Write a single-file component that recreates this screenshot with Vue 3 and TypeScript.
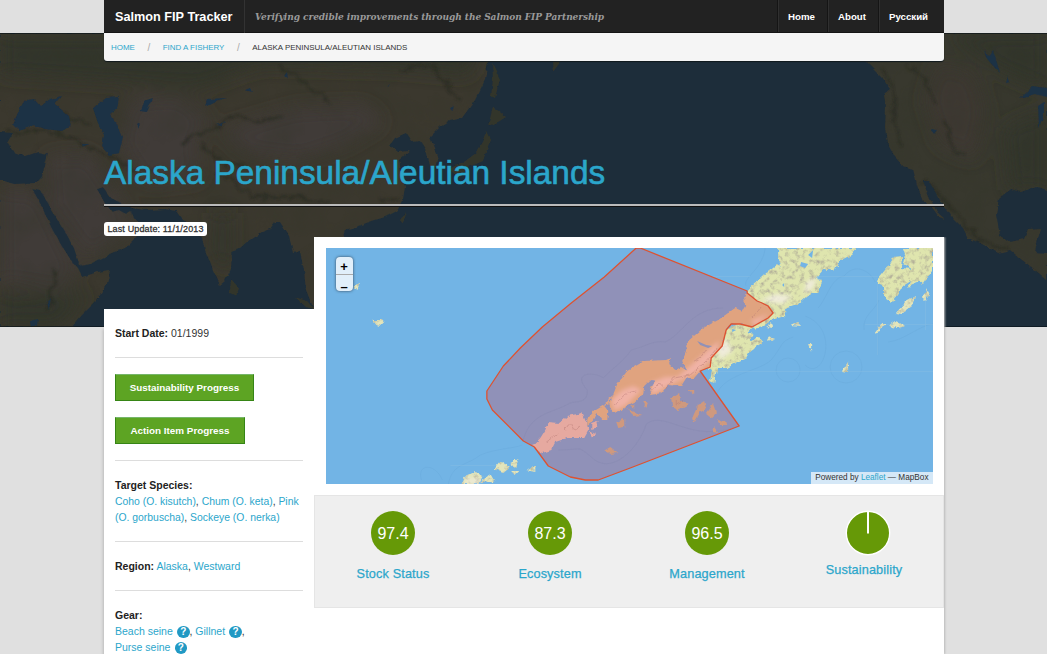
<script setup lang="ts">
interface Score { label: string; value?: string }

const navItems: string[] = ['Home', 'About', 'Русский']
const scores: Score[] = [
  { label: 'Stock Status', value: '97.4' },
  { label: 'Ecosystem', value: '87.3' },
  { label: 'Management', value: '96.5' },
  { label: 'Sustainability' },
]
const zone =
  'M636 248L640 248 747 291 747 293 757 301 762 303 768 306 773 313 768 318 752 327 740 324 731 324 726 330 722 346 711 358 710 367 700 371 739 426 630 468 598 480 585 480 570 477 548 466 534 447 523 441 492 410 486.500 399 486.500 391 503 366 520 348 542 327 571 303 604 277Z'
const peninsula =
  'M747 293L757 301 762 303 768 306 773 313 768 318 752 327 740 324 731 324 726 330 722 346 711 358 710 367 700 371 694 378 686 378 681 386 668 385 661 393 651 395 650 390 655 381 650 380 644 386 643 394 635 401 627 405 620 411 612 412 609 404 614 394 608 399 609 404 604 406 608 411 607 420 602 420 596 413 592 421 587 425 587 419 594 411 604 405 612 397 617 384 627 371 644 361 666 360 670 358 669 364 675 370 681 367 687 371 682 361 685 354 688 341 703 328 718 320 735 308 742 311 745 306 744 297Z'
</script>

<template>
  <div class="screen">
    <svg class="hero" viewBox="0 33 1047 294" preserveAspectRatio="none" aria-hidden="true">
      <defs>
        <filter id="coast" x="-2%" y="-2%" width="104%" height="104%">
          <feTurbulence type="fractalNoise" baseFrequency=".12" numOctaves="3" seed="4" result="n" />
          <feDisplacementMap in="SourceGraphic" in2="n" scale="4" xChannelSelector="R" yChannelSelector="G" />
        </filter>
        <filter id="relief" x="0" y="0" width="100%" height="100%">
          <feTurbulence type="fractalNoise" baseFrequency=".03" numOctaves="5" seed="9" />
          <feColorMatrix values="0 0 0 0 .03  0 0 0 0 .035  0 0 0 0 .02  1.6 0 0 0 -.6" result="t" />
          <feComposite in="t" in2="SourceGraphic" operator="in" />
        </filter>
        <filter id="soft" x="-30%" y="-30%" width="160%" height="160%"><feGaussianBlur stdDeviation="9" /></filter>
        <filter id="ridge" x="-10%" y="-20%" width="120%" height="140%">
          <feTurbulence type="fractalNoise" baseFrequency=".08" numOctaves="3" result="n" />
          <feDisplacementMap in="SourceGraphic" in2="n" scale="14" xChannelSelector="R" yChannelSelector="G" /><feGaussianBlur stdDeviation="1.300" />
        </filter>
        <path id="afroAsia" d="M0 33H489L488 63 485 80 475 100 462 118 450 121 440 127 430 137 434 148 438 160 436 168 430 166 427 152 420 141 412 142 406 133 395 138 390 145 398 152 410 151 399 160 401 172 405 186 403 200 397 211 385 217 372 221 358 226 345 230 342 240 349 252 346 266 330 278 318 266 314 310 306 290 304 270 300 251 293 253 289 236 280 222 275 222 270 229 262 232 248 241 240 248 232 252 231 269 225 281 220 285 213 270 205 250 202 238 194 235 189 225 182 219 176 211 165 209 145 210 132 208 122 204 110 197 103 187 97 189 104 202 112 212 119 210 126 214 131 211 134 218 141 224 137 236 125 248 110 254 90 264 80 266 74 248 64 230 49 205 40 190 32 188 39 201 50 225 60 243 72 262 78 269 82 277 98 272 110 270 107 284 97 300 82 315 72 327H0V180L15 184 36 183 42 176 45 166 48 154 38 152 26 156 12 151 7 143 13 133 0 132Z" />
        <path id="america" d="M840 33H1047V190L1036 186 1021 192 1011 189 999 199 996 215 1000 235 1010 242 1024 239 1028 229 1041 228 1036 246 1035 253 1047 254V280L1034 269 1022 260 1010 250 998 253 984 245 968 238 963 228 951 216 940 200 929 181 923 181 930 198 937 212 945 219 939 217 931 206 923 202 917 185 913 169 903 166 895 157 887 143 885 127 886 108 884 94 890 89 881 76 868 63Z" />
        <clipPath id="landClip"><use href="#afroAsia" /><use href="#america" /></clipPath>
      </defs>
      <rect y="33" width="1047" height="294" fill="#1d2d3a" />
      <g filter="url(#coast)">
        <use href="#afroAsia" fill="#3a382f" />
        <use href="#america" fill="#38372d" />
        <path fill="#33352a" d="M492 63L500 79 495 98 491 96 493 78ZM493 107L506 117 498 122 488 126ZM487 132L491 140 486 152 483 161 469 167 458 177 449 169 464 162 476 153 483 142ZM552 61H561L553 72ZM400 220L407 211 403 224ZM231 279L239 288 236 296 230 293ZM295 297L307 301 314 309 306 307Z" />
      </g>
      <g clip-path="url(#landClip)">
        <g filter="url(#soft)">
          <path d="M0 188L38 190 78 270 62 291 0 282ZM46 156L90 153 125 205 138 225 88 262 50 205ZM130 98L180 94 210 119 195 145 203 178 145 185 118 145ZM220 130L295 108 365 105 384 122 345 145 300 160 245 153Z" fill="#413a37" />
          <path d="M937 62L974 73 986 110 975 160 940 145 925 100Z" fill="#3d3932" />
          <path d="M0 35H480L470 75 396 68 260 65 200 87 0 74ZM0 294H88L60 327H0ZM215 213H230V270L214 258ZM1004 128L1047 110V190H1010ZM944 33H1047V90L1000 70Z" fill="#31352a" />
        </g>
        <g filter="url(#ridge)" fill="none" stroke="#282a20" stroke-width="2.600" opacity=".6">
          <path d="M59 111L75 121 92 125M8 135L35 130 70 137 93 150 110 157 129 168 155 170M214 170L236 185 253 198 278 198 295 194 315 205 330 202M180 142L202 132 228 119 249 115 260 122 286 117M200 145L218 161 245 167M55 270L52 290 48 310M278 66L296 75 312 92 332 103M401 69L430 65 448 86 460 100M883 70L895 93 892 120 900 145M909 63L925 82 934 103M944 120L954 151 966 157M925 181L945 201 959 217 980 241 1008 250M377 199L398 200" />
        </g>
      </g>
      <g filter="url(#relief)" opacity=".3"><use href="#afroAsia" /><use href="#america" /></g>
      <path fill="#1c3044" filter="url(#coast)" d="M13 124L20 108 25 100 35 99 41 106 50 99 61 96 55 104 69 116 71 125 62 131 45 129 34 125 20 131ZM93 108L105 98 119 97 117 109 110 114 118 126 123 137 119 153 109 155 102 147 104 135 98 123ZM204 107L207 99 227 98 216 101ZM141 111L144 101 153 98 147 112ZM216 124L226 121 222 125ZM245 90L250 88 252 92ZM284 76L287 72 288 78ZM386 86L390 82 388 87ZM450 108L454 106 452 111ZM47 303L51 298 49 309ZM30 321L38 319 37 326 31 326ZM82 144H88L83 147ZM136 125L139 123 138 129ZM985 50L989 56 993 50 1000 73 996 69 988 60ZM1020 98L1032 86 1047 88V97L1035 94ZM1038 105L1044 101 1044 115 1039 127ZM930 129L937 130 934 134ZM1006 83L1008 75 1010 82Z" />
      <path d="M0 33.500H1047M0 326.500H1047" stroke="#071016" opacity=".6" />
    </svg>

    <div class="page">
      <header class="topbar">
        <h1>Salmon FIP Tracker</h1>
        <p class="tagline"><span>Verifying credible improvements through the Salmon FIP Partnership</span></p>
        <nav><a v-for="item in navItems" :key="item">{{ item }}</a></nav>
      </header>

      <div class="crumbs">
        <a>HOME</a><i>/</i><a>FIND A FISHERY</a><i>/</i><span>ALASKA PENINSULA/ALEUTIAN ISLANDS</span>
      </div>

      <div class="heading"><h2><span>Alaska Peninsula/Aleutian Islands</span></h2></div>

      <div class="columns">
        <div class="left">
          <div class="update"><span>Last Update: 11/1/2013</span></div>
          <aside>
            <section class="start"><b>Start Date:</b> 01/1999</section>
            <section class="actions">
              <button class="b1">Sustainability Progress</button>
              <button class="b2">Action Item Progress</button>
            </section>
            <section class="species"><b>Target Species:</b><br /><a>Coho (O. kisutch)</a>, <a>Chum (O. keta)</a>, <a>Pink<br />(O. gorbuscha)</a>, <a>Sockeye (O. nerka)</a></section>
            <section class="region"><b>Region:</b> <a>Alaska</a>, <a>Westward</a></section>
            <section class="gear"><b>Gear:</b><br /><a>Beach seine</a> <em>?</em>, <a>Gillnet</a> <em>?</em>,<br /><a>Purse seine</a> <em>?</em></section>
          </aside>
        </div>

        <main>
          <div class="map">
            <svg viewBox="325.500 248 607.500 236" preserveAspectRatio="none" aria-hidden="true">
              <defs>
                <filter id="shore" x="-3%" y="-3%" width="106%" height="106%">
                  <feTurbulence type="fractalNoise" baseFrequency=".19" numOctaves="3" seed="3" result="n" />
                  <feDisplacementMap in="SourceGraphic" in2="n" scale="5" xChannelSelector="R" yChannelSelector="G" result="shape" />
                  <feTurbulence type="fractalNoise" baseFrequency=".2" numOctaves="4" seed="8" />
                  <feColorMatrix values="0 0 0 0 .45  0 0 0 0 .43  0 0 0 0 .32  2.6 0 0 0 -1.2" result="speck" />
                  <feComposite in="speck" in2="shape" operator="in" result="texture" />
                  <feMerge><feMergeNode in="shape" /><feMergeNode in="texture" /></feMerge>
                </filter>
                <filter id="edge" x="-5%" y="-5%" width="110%" height="110%">
                  <feTurbulence type="fractalNoise" baseFrequency=".2" numOctaves="3" seed="5" result="n" />
                  <feDisplacementMap in="SourceGraphic" in2="n" scale="4" xChannelSelector="R" yChannelSelector="G" />
                </filter>
                <filter id="blur"><feGaussianBlur stdDeviation="2" /></filter>
                <clipPath id="zoneClip"><path :d="zone" /></clipPath>
                <clipPath id="penClip"><path :d="peninsula" /></clipPath>
              </defs>
              <rect x="325" y="248" width="609" height="236" fill="#72b4e5" />
              <g fill="none" stroke="#68a9da" stroke-width=".7" opacity=".6">
                <path d="M421 480C416 463 435 463 442 480M448 484C452 463 466 466 480 455 497 448 512 449 522 445M765 248C763 269 742 278 746 286M715 400C718 374 759 372 771 360 783 346 779 342 793 337M818 308C827 298 831 278 844 276 857 260 873 275 875 282M864 330C862 315 875 311 879 300M888 342C903 341 922 324 933 324M805 316C841 329 823 383 805 365" />
                <circle cx="788" cy="370" r="12" /><circle cx="846" cy="367" r="16" />
              </g>
              <path d="M710 276.500H750M810 276.500H878M712 371.500H933M865 324.500H933M877.500 282V355M925.500 292V330M450 465.500H498" stroke="#82bae2" stroke-width=".6" />
              <g filter="url(#shore)">
                <path fill="#dfe5ae" d="M747 292L752 286 764 275 778 264 781 267 778 257 778 248H857L851 255 839 261 834 271 824 269 815 279 823 280 818 291 807 296 797 305 785 309 785 316 774 319 764 326 752 328 746 333 754 334 749 342 759 337 763 342 751 350 747 357 735 363 726 368 717 368 714 382 710 380 712 370 708 370 711 357 722 345 726 329 742 322 769 311ZM877 280L889 265 894 257 902 256 901 268 912 269 903 264 905 254 903 248H933V270L923 284 916 281 908 290 911 281 903 286 898 295 891 303 884 297 884 287 878 284Z" />
                <path fill="#e3e5bb" d="M895 313L906 301 915 296 912 306 902 314ZM874 333L880 325 886 323 880 331ZM889 326L896 321 905 326 897 328ZM922 298L927 288 930 294 925 301ZM766 327L772 323 773 328ZM790 325L797 322 801 326ZM842 371L848 362V372ZM808 344H811V352ZM769 337L774 339 767 341ZM461 484L463 478 473 473 483 475 478 484ZM480 482L490 474 494 481ZM494 469L500 462 510 466 503 472ZM510 463L518 459 516 468ZM525 470L535 466 535 472ZM512 471H518L514 475ZM371 320H383L380 326 375 325ZM352 286L360 283 357 290Z" />
              </g>
              <g filter="url(#blur)" fill="#f4eee9" opacity=".75"><path d="M716 346L726 339 732 351 720 360ZM807 281L817 278 812 289 804 293ZM760 300L776 294 792 296 782 304ZM466 479H479V483H465Z" /></g>
              <path fill="#72b4e5" d="M801 262L808 264 805 268 800 266ZM808 255L813 250 812 258ZM782 285L784 283 784 287ZM732 329L736 330 732 332Z" />
              <path :d="zone" fill="#9091b8" />
              <g clip-path="url(#zoneClip)">
                <path fill="none" stroke="#8587b0" stroke-width=".7" opacity=".5" d="M522 444C528 413 550 414 568 404 574 400 588 405 587 390 570 371 596 372 603 378 611 369 622 363 631 350 647 346 653 340 665 342 683 334 691 308 723 308M558 450C582 450 576 445 590 456 610 478 639 448 646 424 665 409 690 445 739 426" />
                <g filter="url(#edge)">
                  <path :d="peninsula" fill="#e0a37f" />
                  <path fill="#e6a9a0" d="M533 445L540 438 545 430 548 422 559 423 567 416 582 413 586 423 589 429 584 438 567 438 555 442 551 450 542 453 533 449ZM591 423L597 421 598 426 591 430ZM589 432L596 434 592 437Z" />
                  <path fill="#cf997e" d="M605 450L610 447 618 453 610 454ZM616 422L624 419 624 427 618 428ZM671 398L679 393 680 401 688 404 678 410 672 407ZM692 418L698 405 704 401 706 409 699 413 693 423ZM706 414L713 404 716 413 711 418ZM717 420L725 421 726 425 720 425ZM630 405L634 404 634 409ZM643 402L648 402 646 407ZM688 390L694 390 694 394ZM711 430L714 427 718 433 713 432ZM626 408L632 411 642 415 634 416Z" />
                </g>
                <g clip-path="url(#penClip)"><path filter="url(#blur)" fill="#f0b2a6" d="M650 383L665 377 677 377 691 365 710 348 719 341 716 355 699 371 685 378 671 384 652 395ZM611 400L622 390 633 386 641 390 626 405 614 411ZM750 321L768 314 756 326Z" /></g>
                <path fill="none" stroke="#b77a75" stroke-width=".9" filter="url(#edge)" opacity=".5" d="M563 431L570 423 573 430 580 426M545 442L558 434M650 392L660 383 666 388 674 378 690 375 704 363 717 348M614 405L625 394 636 391M752 318L761 307M692 362L700 358 706 350M676 400V405L684 401" />
                <path fill="#9091b8" d="M697 341L706 345 712 346 708 348 700 345Z" />
              </g>
              <path :d="zone" fill="none" stroke="#de5230" stroke-width="1.300" stroke-linejoin="round" />
            </svg>
            <div class="zoom"><span>+</span><span>–</span></div>
            <div class="credit">Powered by <a>Leaflet</a> — MapBox</div>
          </div>
          <div class="scores">
            <div v-for="s in scores" :key="s.label" class="score" :class="{ chart: !s.value }">
              <div v-if="s.value" class="disc">{{ s.value }}</div>
              <svg v-else width="46" height="46" viewBox="0 0 46 46"><circle cx="23" cy="23" r="21.700" fill="#669907" stroke="#fff" stroke-width="1.400" /><path d="M23 1V23.500" stroke="#fff" stroke-width="2" /></svg>
              <a>{{ s.label }}</a>
            </div>
          </div>
        </main>
      </div>
    </div>
  </div>
</template>

<style>
html, body { margin: 0; background: #e0e0e0; overflow: hidden; }
</style>
<style scoped>
* { box-sizing: border-box; }
.screen { position: relative; width: 1047px; height: 654px; overflow: hidden; background: #e0e0e0; font-family: "Liberation Sans", Arial, sans-serif; color: #333; }
.hero { position: absolute; left: 0; top: 33px; width: 1047px; height: 294px; }
.page { position: relative; width: 840px; margin-left: 104px; height: 654px; }
h1, h2, p { margin: 0; }
a { color: #2ba6cb; }
.topbar { height: 33px; background: #222; display: flex; align-items: center; border-bottom: 1px solid #151515; }
h1 { width: 141px; line-height: 32px; padding: 1px 0 0 11px; font-size: 12.700px; color: #fff; border-right: 1px solid #333; white-space: nowrap; }
.tagline { flex: 1; padding: 2px 0 0 10px; font: italic bold 9px/30px "DejaVu Serif", serif; letter-spacing: -.05px; color: #999; white-space: nowrap; }
nav { display: flex; }
nav a { height: 32px; line-height: 33px; padding: 0 11px 0 9px; border-left: 1px solid #151515; box-shadow: inset 1px 0 #303030; color: #fff; font-size: 9.700px; font-weight: bold; text-align: center; width: 50px; white-space: nowrap; }
nav a:nth-child(2) { width: 51px; }
nav a:last-child { width: 66px; padding-right: 15px; }
.crumbs { height: 28px; padding: 1px 7px 0; background: #f5f5f5; border-radius: 0 0 3px 3px; display: flex; align-items: center; font-size: 7.960px; color: #333; box-shadow: 0 1px 1px #10191d; white-space: nowrap; }
.crumbs i { width: 27.800px; text-align: center; font-size: 10px; color: #aaa; font-style: normal; }
.heading { height: 145px; padding-top: 91px; border-bottom: 2px solid #bbb; box-shadow: 0 1px #111; }
h2 { font-weight: normal; font-size: 33.400px; line-height: 42px; color: #2ba6cb; -webkit-text-stroke: .6px #2ba6cb; white-space: nowrap; }
.columns { display: flex; }
.left { width: 210px; padding-top: 16px; }
.update { height: 87px; }
.update span { display: block; width: 103px; height: 14px; border-radius: 3px; background: #fff; text-align: center; font-size: 9px; letter-spacing: .15px; line-height: 14px; color: #333; -webkit-text-stroke: .3px; white-space: nowrap; }
aside { height: 345px; background: #fff; padding: 0 11px; font-size: 10.400px; line-height: 16px; white-space: nowrap; box-shadow: -1px 20px 3px #bbb; }
section { border-bottom: 1px solid #ddd; }
b { color: #222; font-size: 10.500px; }
.start { height: 49px; padding-top: 16px; font-size: 10.500px; }
.actions { height: 103px; padding-top: 16px; display: flex; flex-direction: column; align-items: flex-start; gap: 16px; }
button { height: 27px; padding: 0; border: 1px solid #368515; border-top-color: #76b66a; background: #5da423; color: #fff; font: bold 9.850px "Liberation Sans", sans-serif; white-space: nowrap; }
.b1 { width: 139px; }
.b2 { width: 130px; }
.species { height: 81px; padding-top: 16px; }
.region { height: 49px; padding-top: 16px; font-size: 10.500px; }
.gear { padding-top: 16px; border: 0; font-size: 10.500px; line-height: 16px; }
em { display: inline-block; width: 12.500px; height: 12px; margin: -2px 0 -2px 1.300px; border-radius: 50%; background: #2199c4; color: #fff; font: bold 10px/12px "Liberation Sans", sans-serif; text-align: center; vertical-align: 0; }
main { width: 630px; height: 417px; margin-top: 31px; padding-top: 11px; background: #fff; box-shadow: 1px 0 2px #bbb; clip-path: inset(0 -4px 0 0); }
.map { position: relative; height: 236px; margin: 0 11.500px 11px; overflow: hidden; }
.map > svg { display: block; width: 100%; height: 100%; }
.zoom { position: absolute; left: 10px; top: 9px; width: 17px; height: 34px; border-radius: 4px; background: #e1effa; box-shadow: 0 0 3px #345; font: bold 13px/19px "Liberation Sans", sans-serif; color: #000; text-align: center; }
.zoom span { display: block; height: 17px; }
.zoom span + span { border-top: 1px solid #aaa; line-height: 24px; }
.credit { position: absolute; right: 0; bottom: 0; height: 12px; padding: 0 4px; background: #d5e8f7; font-size: 8.220px; line-height: 12px; color: #333; white-space: nowrap; }
.scores { height: 113px; padding-top: 15px; display: grid; grid-template-columns: repeat(4, 157px); background: #efefef; border: 1px solid #e5e5e5; }
.score { display: flex; flex-direction: column; align-items: center; font-size: 12.700px; padding-right: 1px; }
.disc { width: 44px; height: 44px; border-radius: 50%; background: #669907; color: #fff; text-align: center; font-size: 16px; line-height: 46px; }
.score a { margin-top: 12px; line-height: 14px; letter-spacing: .13px; -webkit-text-stroke: .25px #2ba6cb; }
.score.chart { padding: 0 0 0 6px; }
.chart svg { margin-top: -1px; }
.chart a { margin-top: 7px; margin-right: 7px; }
</style>
